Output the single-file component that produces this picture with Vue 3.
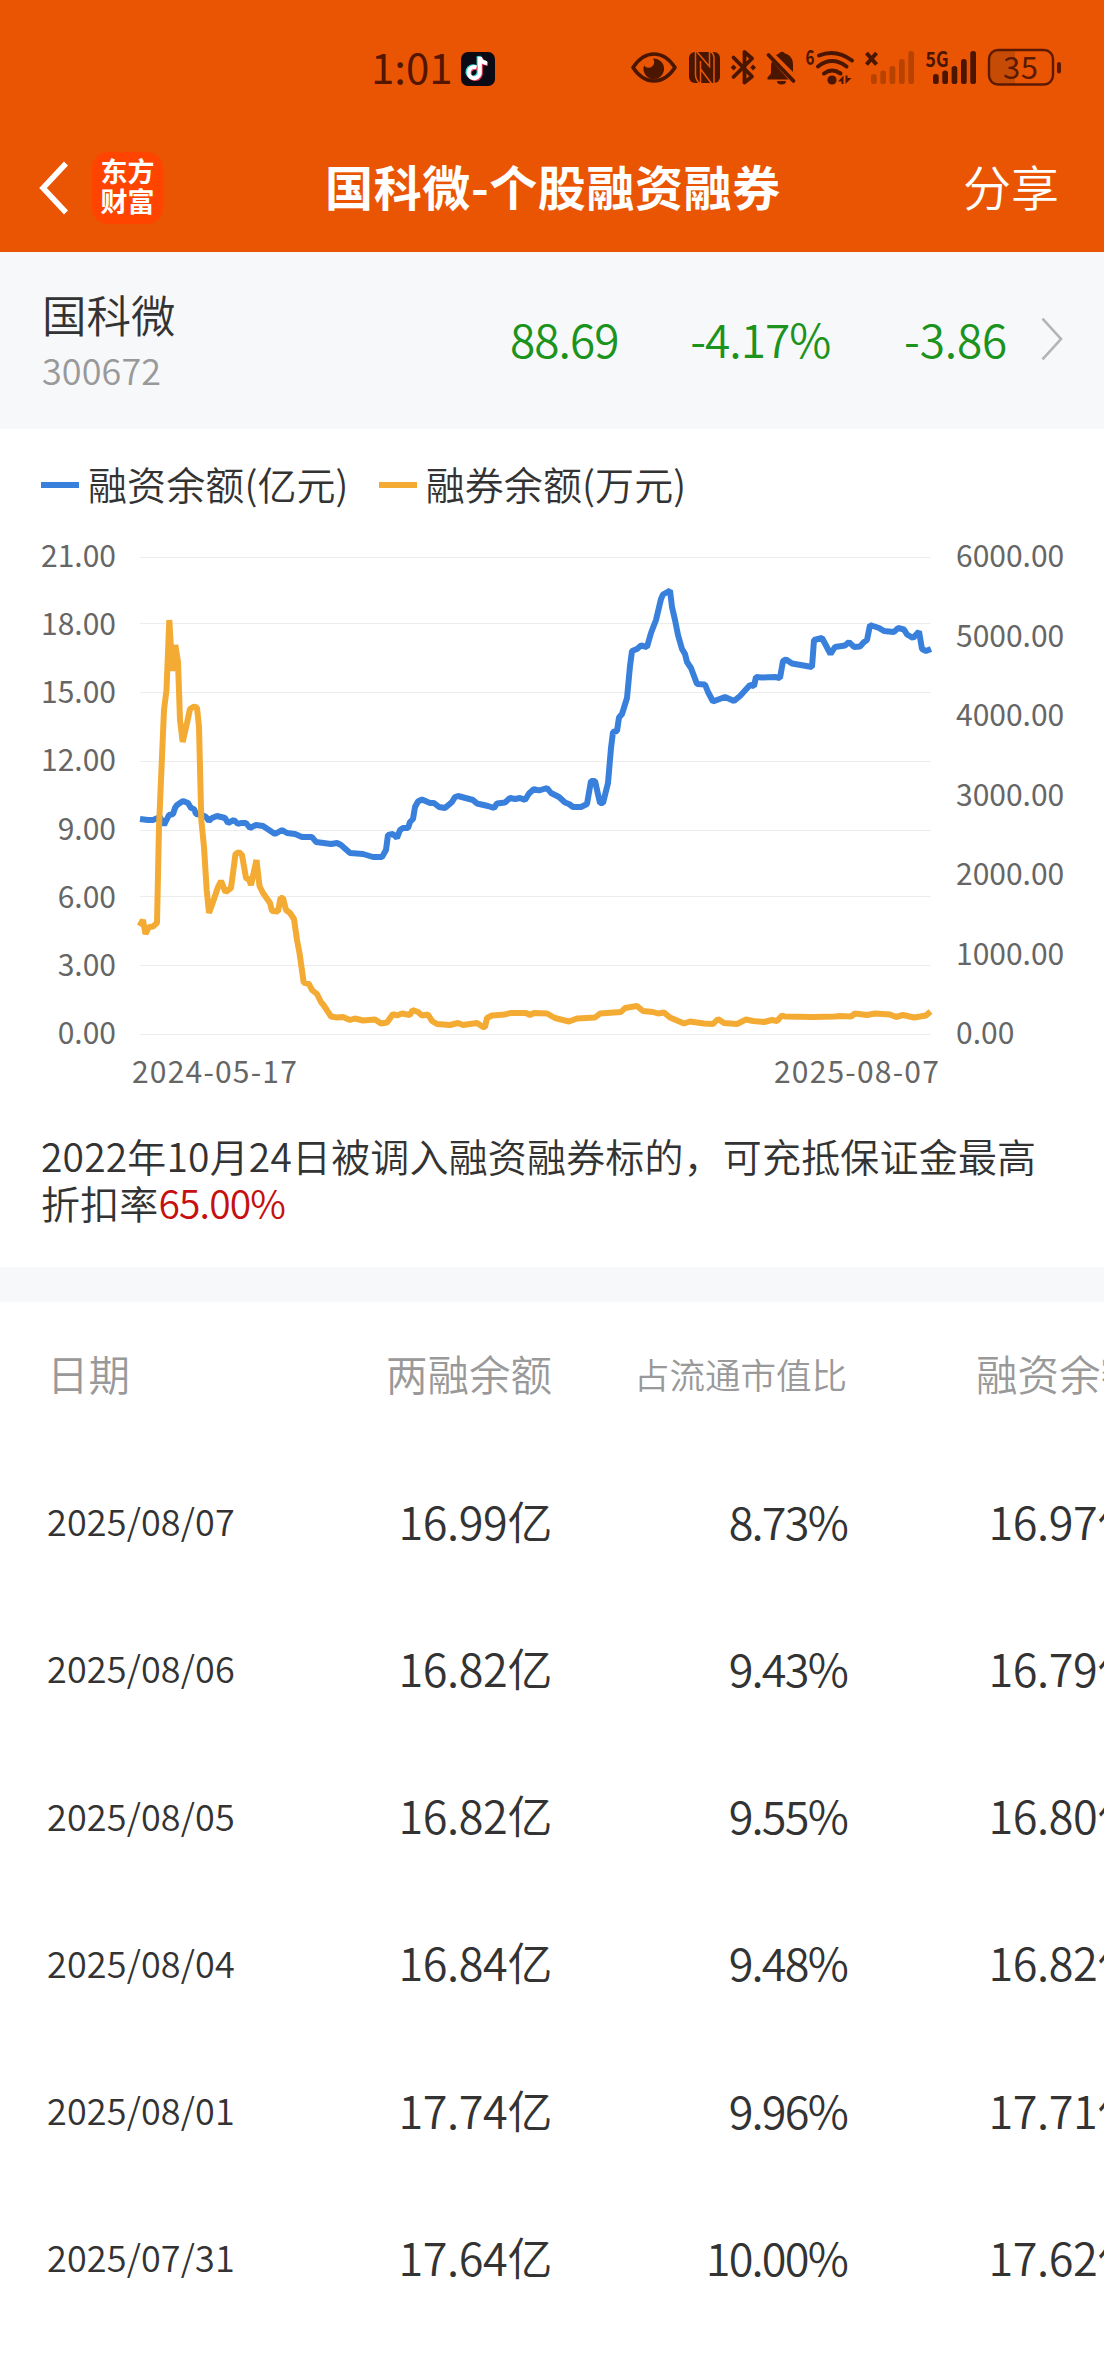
<template>
  <div class="page">
    <header class="header">
      <div class="status">
        <div class="status__left">
          <span class="status__time">1:01</span>
          <svg class="status__app" viewBox="0 0 34 34">
            <rect width="34" height="34" rx="7" fill="#0c0a14" />
            <g fill="none" stroke-width="4">
              <path d="M15.5 15.5a5.6 5.6 0 1 0 3.3 5.8V5c.6 3.4 3 5.8 7.2 6.2" stroke="#38d8d6" transform="translate(-1.2 -.8)" />
              <path d="M15.5 15.5a5.6 5.6 0 1 0 3.3 5.8V5c.6 3.4 3 5.8 7.2 6.2" stroke="#ee3a5c" transform="translate(1 .8)" />
              <path d="M15.5 15.5a5.6 5.6 0 1 0 3.3 5.8V5c.6 3.4 3 5.8 7.2 6.2" stroke="#fff" />
            </g>
          </svg>
        </div>
        <svg class="status__icons" viewBox="628 32 436 70">
          <!-- eye -->
          <path d="M632 67.5C644 49.5 662 49.5 674 67.5C662 85.5 644 85.5 632 67.5Z" fill="none" stroke="#4a1600" stroke-width="3.6" stroke-linejoin="round" />
          <path d="M652 58.5a10.3 10.3 0 1 1-9 7a5.6 5.6 0 0 0 9-7z" fill="#4a1600" />
          <!-- nfc -->
          <rect x="688" y="52" width="31" height="31" rx="6" fill="#4a1600" />
          <path d="M694.5 51.5V75q.3 5 4 8.500M696 52l12.500 14.500V52M699.5 83.500V61M699.5 69l11 14.500M709.5 51.5q3.500 2 3.500 7v25" fill="none" stroke="#ea5504" stroke-width="1.5" />
          <!-- bluetooth -->
          <path d="M732.5 57.5L751 76.5L743.5 82.5V52L751 58.5L732.5 77" fill="none" stroke="#4a1600" stroke-width="3.8" stroke-linejoin="round" stroke-linecap="round" />
          <path d="M732.5 64.5l3 3-3 3-2.8-3zM752 64.5l3 3-3 3-2.8-3z" fill="#4a1600" />
          <!-- muted bell -->
          <path d="M778 53.5a3.5 3.5 0 0 1 6 0c6 2 8 6 8 11v7.5l-17-17zM771 61l16.5 18.5H766.5v-2l3.5-4V65zM776 81h9a4.5 3.5 0 0 1-9 0z" fill="#4a1600" />
          <path d="M767.5 55L792.5 81" stroke="#4a1600" stroke-width="3.8" stroke-linecap="round" />
          <!-- wifi -->
          <text x="804.5" y="65" font-size="20" font-weight="700" textLength="9" lengthAdjust="spacingAndGlyphs" fill="#4a1600">6</text>
          <path d="M818 55.5Q835 48.5 851 60.5M817 66.5Q831 55.5 845.5 66.5M823 73.5Q831 67.5 839.5 73.5" fill="none" stroke="#4a1600" stroke-width="4" stroke-linecap="round" />
          <circle cx="831" cy="80" r="4.6" fill="#4a1600" />
          <path d="M837 81.5l5.5-6v8.5h-2v-2.5zM844.5 75.5h2v2.5h4l-6 6z" fill="#4a1600" />
          <!-- empty sim -->
          <path d="M865.5 53l10 11.5M875.5 53l-10 11.5" stroke="#4a1600" stroke-width="4" />
          <rect v-for="bar in bars" :key="'a' + bar.x" :x="870 + bar.x" :y="bar.y" width="5.7" :height="84 - bar.y" rx="2.6" fill="#b84300" />
          <!-- active sim -->
          <text x="924.5" y="67" font-size="21" font-weight="700" textLength="23" lengthAdjust="spacingAndGlyphs" fill="#4a1600">5G</text>
          <rect v-for="bar in bars" :key="'b' + bar.x" :x="932 + bar.x" :y="bar.y" width="5.7" :height="84 - bar.y" rx="2.6" fill="#4a1600" />
          <!-- battery -->
          <path d="M996 51h18v33h-18a8 8 0 0 1-8-8V59a8 8 0 0 1 8-8z" fill="#c64b05" />
          <rect x="988" y="50" width="64" height="34.5" rx="9" fill="none" stroke="#5c1a02" stroke-width="2.4" />
          <rect x="1056" y="62" width="4" height="11.5" rx="2" fill="#5c1a02" />
          <text x="1002" y="79" font-size="31" font-weight="400" textLength="35" fill="#5c1a02">35</text>
        </svg>
      </div>
      <nav class="nav">
        <div class="nav__left">
          <svg class="nav__back" viewBox="0 0 30 54">
            <path d="M27 2.5L4 27L27 51.5" fill="none" stroke="#fff" stroke-width="5.5" />
          </svg>
          <div class="logo">东方<br />财富</div>
        </div>
        <h1 class="nav__title">国科微-个股融资融券</h1>
        <span class="nav__share">分享</span>
      </nav>
    </header>

    <section class="quote">
      <div class="quote__stock">
        <div class="quote__name">国科微</div>
        <div class="quote__code">300672</div>
      </div>
      <span class="quote__value">88.69</span>
      <span class="quote__value quote__value--pct">-4.17%</span>
      <span class="quote__value quote__value--diff">-3.86</span>
      <svg class="quote__arrow" viewBox="0 0 22 44">
        <path d="M1.5 1.5L20 22L1.5 42.5" fill="none" stroke="#b4b4b6" stroke-width="2.6" />
      </svg>
    </section>

    <section class="legend">
      <div class="legend__item"><span>融资余额(亿元)</span></div>
      <div class="legend__item legend__item--short"><span>融券余额(万元)</span></div>
    </section>

    <section class="chart">
      <div class="chart__axis chart__axis--left">
        <span v-for="label in leftAxis" :key="label">{{ label }}</span>
      </div>
      <svg class="chart__plot" viewBox="136 537 800 511">
        <line v-for="y in gridLines" :key="y" x1="140" x2="930.5" :y1="y" :y2="y" stroke="#ececec" stroke-width="1.2" />
        <polyline :points="financing" stroke="#3880dc" />
        <polyline :points="lending" stroke="#f4ab33" />
      </svg>
      <div class="chart__axis chart__axis--right">
        <span v-for="label in rightAxis" :key="label">{{ label }}</span>
      </div>
    </section>
    <div class="dates">
      <span>2024-05-17</span>
      <span>2025-08-07</span>
    </div>

    <p class="note">2022年10月24日被调入融资融券标的，可充抵保证金最高折扣率<span class="note__rate">65.00%</span></p>

    <section class="table">
      <div class="table__row table__row--head">
        <span>日期</span>
        <span>两融余额</span>
        <span class="table__small">占流通市值比</span>
        <span>融资余额</span>
      </div>
      <div v-for="row in rows" :key="row.date" class="table__row">
        <span class="table__date">{{ row.date }}</span>
        <span>{{ row.total }}</span>
        <span class="table__ratio">{{ row.ratio }}</span>
        <span>{{ row.balance }}</span>
      </div>
    </section>
  </div>
</template>

<script setup>
const bars = [
  { x: 0, y: 74 },
  { x: 9.3, y: 70.5 },
  { x: 18.6, y: 66 },
  { x: 28, y: 59 },
  { x: 37.3, y: 51 }
]

const leftAxis = ['21.00', '18.00', '15.00', '12.00', '9.00', '6.00', '3.00', '0.00']
const rightAxis = ['6000.00', '5000.00', '4000.00', '3000.00', '2000.00', '1000.00', '0.00']
const gridLines = [557.5, 623.5, 692.5, 761.5, 830.5, 896.5, 965.5, 1034.5]

const financing = `
  140,819 148,820 153,820 160,817 164,825 169,815 173,814 175,808 177,805 183,801 188,803 191,808 194,809
  196,814 202,815 206,817 209,821 212,818 217,816 225,818 228,823 234,820 238,824 241,823 246,823 250,828
  256,825 263,826 275,834 282,830 287,833 295,834 302,837 312,837 316,842 331,844 337,843 341,845 350,853
  363,854 373,857 382,857 386,850 388,835 393,834 397,838 400,830 403,828 408,828 410,822 413,819 415,807
  418,801.5 422,799.5 430,803 434,803 439,807 445,808 452,802 455,797 458,796 473,800 477,803.5 488,806
  494,808 497,803.5 505,802.5 510,798 515,799 520,798 525,800 529,793.5 534,789 539,790.5 547,788
  551,793 559,797 565,802.5 569,804 573,807 581,807 587,804 591,781 595,781 600,803 603,803 608,783
  611,748 613,732 617,731 619,717.5 622,714 627,698 630,666 632,651 637,649 641,645.5 647,647 651,633
  656,620 661,599 663,594.5 670,590.5 672,607 675,620 678,635 682,649 685,654 687,662 691,668 697,684
  705,684.5 708,692 713,701.5 725,697 734,701 740,696 750,685 754,686 756,677 762,677.5 775,677
  780,678 783,661 786,659.5 792,663.5 812,667 814,640 822,638 826,645.5 830.5,654 835,647 845,645.5
  849,642 854,647 860,646.5 864,642 867,640 870,625 879,628 884,631 894,632 898,628 904,629.5 907,634.5
  913,638 919,631.5 922,649 926,651 931,649`

const lending = `
  139.5,926 143,920 145.5,934 149,927 153,926.5 157,923 159,827 164,710 166.5,690 169.3,620
  172.3,671 175.3,645 178,662 180,720 182.7,742 187,723 190,709 194,706.5 197,707.5 199,727
  201.3,820 204,847 206.7,890 209,913 213,902 215,896 218,887 221,881 225.5,892 231,888 233,873
  235.5,854 239,852 242,855 246,878 249,879.5 251,885 256.5,860 259.5,886 263,893 270,903 272,911
  278,911.5 280.5,898 283,898 286,910 290,913 294,919 297,940 299.5,953 303.7,982.5 309,984
  312,990 317,994 321,1002 323.5,1005 331,1016.5 337,1017.5 343,1017 350,1020 355,1018.5 363,1020.5
  375,1019.5 381,1023.5 387,1022.5 393,1014 397,1015.5 402,1013.5 410,1015 412.5,1010 418,1012
  422,1015.5 428,1014.5 432,1021 437,1024 450,1025 458,1023 463,1025 477,1023 483,1027 485,1027
  487,1018 492,1015.5 505,1014.5 510,1013 526,1013 530,1015 534,1013 547,1013.5 555,1018 569,1021.5
  577,1018.5 595,1017.5 600,1013.5 621,1012 625,1008 637,1006 643,1011 653,1012 658,1013.5
  664,1012.5 670,1017.5 684,1023.5 690,1021.5 704,1023.5 713,1024 718,1019 724,1023 737,1024
  746,1019.5 753,1021 764,1022 772,1020 777,1021 782,1015.5 785,1016.5 813,1017 835,1016.5 840,1016
  851,1016.5 855,1013.5 867,1015 875,1013.5 890,1014.5 896,1017 903,1015 914,1017.5 926,1015.5
  930.5,1011.5`

const rows = [
  { date: '2025/08/07', total: '16.99亿', ratio: '8.73%', balance: '16.97亿' },
  { date: '2025/08/06', total: '16.82亿', ratio: '9.43%', balance: '16.79亿' },
  { date: '2025/08/05', total: '16.82亿', ratio: '9.55%', balance: '16.80亿' },
  { date: '2025/08/04', total: '16.84亿', ratio: '9.48%', balance: '16.82亿' },
  { date: '2025/08/01', total: '17.74亿', ratio: '9.96%', balance: '17.71亿' },
  { date: '2025/07/31', total: '17.64亿', ratio: '10.00%', balance: '17.62亿' }
]
</script>

<style>
body {
  background: #fff;
}
</style>

<style scoped>
.page {
  width: 1104px;
  height: 2376px;
  overflow: hidden;
  background: #fff;
  color: #333;
  font-family: "Noto Sans CJK SC", sans-serif;
  font-weight: 350;
}

.header {
  height: 252px;
  background: #ea5504;
  color: #fff;
}

.status {
  height: 134px;
  display: flex;
  align-items: center;
  justify-content: space-between;
  box-sizing: border-box;
  padding: 0 39px 0 371px;
}

.status__left {
  display: flex;
  align-items: center;
  gap: 10px;
  color: #551600;
}

.status__time {
  width: 80px;
  padding-bottom: 2px;
  font-size: 42px;
  line-height: 60px;
  font-weight: 400;
}

.status__app {
  width: 34px;
  height: 34px;
  margin-top: 3px;
}

.status__icons {
  width: 436px;
  height: 70px;
}

.nav {
  height: 108px;
  display: grid;
  grid-template-columns: 1fr auto 1fr;
  align-items: center;
  padding: 0 45px 0 39px;
}

.nav__left {
  display: flex;
  align-items: center;
  gap: 23px;
}

.nav__back {
  width: 30px;
  height: 54px;
}

.logo {
  width: 71px;
  height: 72px;
  box-sizing: border-box;
  padding-top: 4px;
  border-radius: 16px;
  background: #ff4400;
  font-size: 27px;
  line-height: 30px;
  font-weight: 700;
  text-align: center;
}

.nav__title {
  margin: 0;
  padding: 0 0 6px 8px;
  font-size: 48px;
  line-height: 70px;
  font-weight: 700;
  letter-spacing: 0.6px;
}

.nav__share {
  padding-bottom: 6px;
  text-align: right;
  font-size: 48px;
  line-height: 70px;
}

.quote {
  height: 177px;
  display: flex;
  align-items: center;
  box-sizing: border-box;
  padding: 0 41px 0 42px;
  background: #f7f8fa;
}

.quote__stock {
  width: 300px;
  padding-bottom: 4px;
}

.quote__name {
  font-size: 44.5px;
  line-height: 60px;
}

.quote__code {
  font-size: 36px;
  line-height: 50px;
  letter-spacing: 0.1px;
  color: #999;
}

.quote__value {
  width: 277px;
  padding-bottom: 5px;
  text-align: right;
  font-size: 46px;
  line-height: 66px;
  letter-spacing: -1px;
  color: #1b931d;
}

.quote__value--pct {
  width: 212px;
}

.quote__value--diff {
  width: 177px;
  letter-spacing: -0.2px;
}

.quote__arrow {
  width: 22px;
  height: 44px;
  margin-left: 34px;
  margin-bottom: 3px;
}

.legend {
  height: 108px;
  box-sizing: border-box;
  padding: 9px 0 5px 41px;
  display: flex;
  align-items: center;
  gap: 30px;
  font-size: 39px;
  line-height: 56px;
  letter-spacing: 0.1px;
}

.legend__item {
  display: flex;
  align-items: center;
  gap: 9px;
}

.legend__item span {
  padding-bottom: 5px;
}

.legend__item::before {
  content: "";
  width: 38px;
  height: 6px;
  background: #3880dc;
}

.legend__item--short::before {
  background: #f4ab33;
}

.chart {
  height: 511px;
  display: grid;
  grid-template-columns: 116px 800px 1fr;
  column-gap: 20px;
}

.chart__axis {
  display: flex;
  flex-direction: column;
  justify-content: space-between;
  font-size: 30px;
  line-height: 34px;
  font-weight: 400;
  color: #666;
}

.chart__axis--left {
  text-align: right;
}

.chart__plot {
  width: 800px;
  height: 511px;
}

.chart__plot polyline {
  fill: none;
  stroke-width: 6;
  stroke-linejoin: bevel;
}

.dates {
  display: flex;
  justify-content: space-between;
  margin-top: 1px;
  padding: 0 164px 0 132px;
  font-size: 30px;
  line-height: 42px;
  letter-spacing: 1.2px;
  font-weight: 400;
  color: #666;
}

.note {
  height: 176px;
  box-sizing: border-box;
  margin: 0;
  padding: 41px 40px 0 41px;
  font-size: 39px;
  line-height: 46.5px;
  letter-spacing: 0.17px;
}

.note__rate {
  letter-spacing: -0.9px;
  color: #c5100f;
}

.table {
  border-top: 35px solid #f7f8fa;
}

.table__row {
  display: grid;
  grid-template-columns: 253px 252px 295px 295px;
  align-items: center;
  height: 147.2px;
  box-sizing: border-box;
  padding: 0 0 5px 47px;
  font-size: 45px;
  text-align: right;
  letter-spacing: -0.4px;
}

.table__row--head {
  font-size: 41.5px;
  letter-spacing: 0;
  color: #999;
}

.table__row > :first-child {
  text-align: left;
}

.table__row .table__small {
  font-size: 35.5px;
}

.table__row .table__date {
  font-size: 36px;
  letter-spacing: 0.15px;
}

.table__row .table__ratio {
  letter-spacing: -1.8px;
}
</style>
